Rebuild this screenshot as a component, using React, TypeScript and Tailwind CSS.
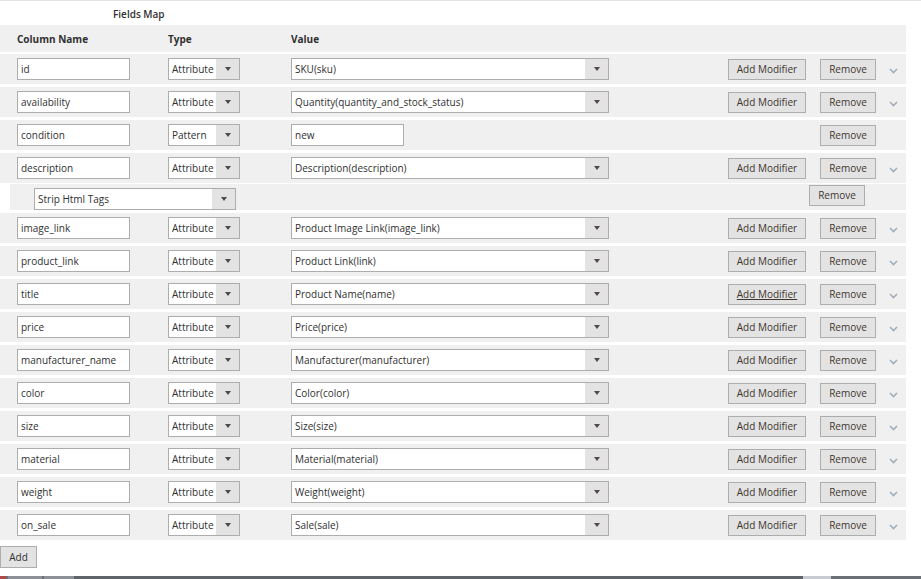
import React from "react";

type Row = {
  name: string;
  type: string;
  value: string;
  pattern?: boolean;
  hover?: boolean;
};

const rows: Row[] = [
  { name: "id", type: "Attribute", value: "SKU(sku)" },
  { name: "availability", type: "Attribute", value: "Quantity(quantity_and_stock_status)" },
  { name: "condition", type: "Pattern", value: "new", pattern: true },
  { name: "description", type: "Attribute", value: "Description(description)" },
  { name: "image_link", type: "Attribute", value: "Product Image Link(image_link)" },
  { name: "product_link", type: "Attribute", value: "Product Link(link)" },
  { name: "title", type: "Attribute", value: "Product Name(name)", hover: true },
  { name: "price", type: "Attribute", value: "Price(price)" },
  { name: "manufacturer_name", type: "Attribute", value: "Manufacturer(manufacturer)" },
  { name: "color", type: "Attribute", value: "Color(color)" },
  { name: "size", type: "Attribute", value: "Size(size)" },
  { name: "material", type: "Attribute", value: "Material(material)" },
  { name: "weight", type: "Attribute", value: "Weight(weight)" },
  { name: "on_sale", type: "Attribute", value: "Sale(sale)" },
];

function Select({ label, width }: { label: string; width: string }) {
  return (
    <div className={`${width} h-[22px] flex border border-[#adadad] bg-white`}>
      <span className="flex-1 pl-[3px] leading-[20px] text-[#303030] truncate">{label}</span>
      <span className="w-[23px] bg-[#e3e3e3] flex items-center justify-center">
        <svg width="6" height="4" viewBox="0 0 6 4">
          <path d="M0 0h6L3 4z" fill="#514943" />
        </svg>
      </span>
    </div>
  );
}

function TextInput({ value, width }: { value: string; width: string }) {
  return (
    <div className={`${width} h-[22px] border border-[#adadad] bg-white pl-[3px] leading-[20px] text-[#303030]`}>
      {value}
    </div>
  );
}

function Button({ children, width, underline }: { children: React.ReactNode; width: string; underline?: boolean }) {
  return (
    <button
      className={`${width} h-[21px] border border-[#adadad] bg-[#e3e3e3] text-[#41362f] leading-[19px] text-center ${
        underline ? "underline" : ""
      }`}
    >
      {children}
    </button>
  );
}

function Chevron() {
  return (
    <svg width="9" height="6" viewBox="0 0 9 6" className="ml-[13px] mt-[3px]">
      <path d="M1 1l3.5 3.5L8 1" fill="none" stroke="#a3adb8" strokeWidth="1.6" />
    </svg>
  );
}

export default function App() {
  return (
    <div
      className="w-[921px] h-[579px] bg-white text-[10px] flex flex-col overflow-hidden"
      style={{ fontFamily: '"Open Sans", "Noto Sans", sans-serif' }}
    >
      <div className="h-px bg-[#e3e3e3]" />
      {/* Title */}
      <div className="h-[24px] pl-[113px] pt-[2px] flex items-center font-semibold text-[#303030]">Fields Map</div>

      {/* Header */}
      <div className="w-[906px] h-[27px] bg-[#f0f0f0] flex items-center pl-[17px] pt-[2px] font-bold text-[#303030]">
        <span className="w-[151px]">Column Name</span>
        <span className="w-[123px]">Type</span>
        <span>Value</span>
      </div>

      {/* Rows */}
      {rows.map((r, i) => (
        <React.Fragment key={r.name}>
          <div
            className={`w-[906px] h-[30px] ${i === 0 ? "mt-[2px]" : "mt-[3px]"} bg-[#f0f0f0] flex items-center pl-[17px]`}
          >
            <div className="w-[151px]">
              <TextInput value={r.name} width="w-[113px]" />
            </div>
            <div className="w-[123px]">
              <Select label={r.type} width="w-[72px]" />
            </div>
            <div className="w-[437px]">
              {r.pattern ? <TextInput value={r.value} width="w-[113px]" /> : <Select label={r.value} width="w-[318px]" />}
            </div>
            {r.pattern ? (
              <div className="w-[92px]" />
            ) : (
              <div className="w-[92px]">
                <Button width="w-[78px]" underline={r.hover}>
                  Add Modifier
                </Button>
              </div>
            )}
            <Button width="w-[56px]">Remove</Button>
            {!r.pattern && <Chevron />}
          </div>
          {r.name === "description" && (
            <div className="w-[906px] h-[26px] mt-px flex">
              <div className="w-[10px] bg-white" />
              <div className="flex-1 bg-[#f0f0f0] flex items-center pl-[24px]">
                <div className="w-[775px] mt-[3px]">
                  <Select label="Strip Html Tags" width="w-[202px]" />
                </div>
                <div className="-mt-[3px]">
                  <Button width="w-[56px]">Remove</Button>
                </div>
              </div>
            </div>
          )}
        </React.Fragment>
      ))}

      {/* Add */}
      <div className="mt-[6px]">
        <button className="w-[37px] h-[22px] border border-[#adadad] bg-[#e3e3e3] text-[#303030]">Add</button>
      </div>

      <div className="flex-1" />
      {/* taskbar strip */}
      <div className="h-[3px] flex bg-[#6b7077]">
        <div className="w-[6px] bg-[#b04a4a]" />
        <div className="w-[34px] ml-[2px] bg-[#8d9197]" />
        <div className="w-[30px] ml-[2px] bg-[#8d9197]" />
        <div className="flex-1 bg-[#5f646b]" />
        <div className="w-[28px] bg-[#c8cbcf]" />
        <div className="w-[90px] bg-[#6b7077]" />
      </div>
    </div>
  );
}
